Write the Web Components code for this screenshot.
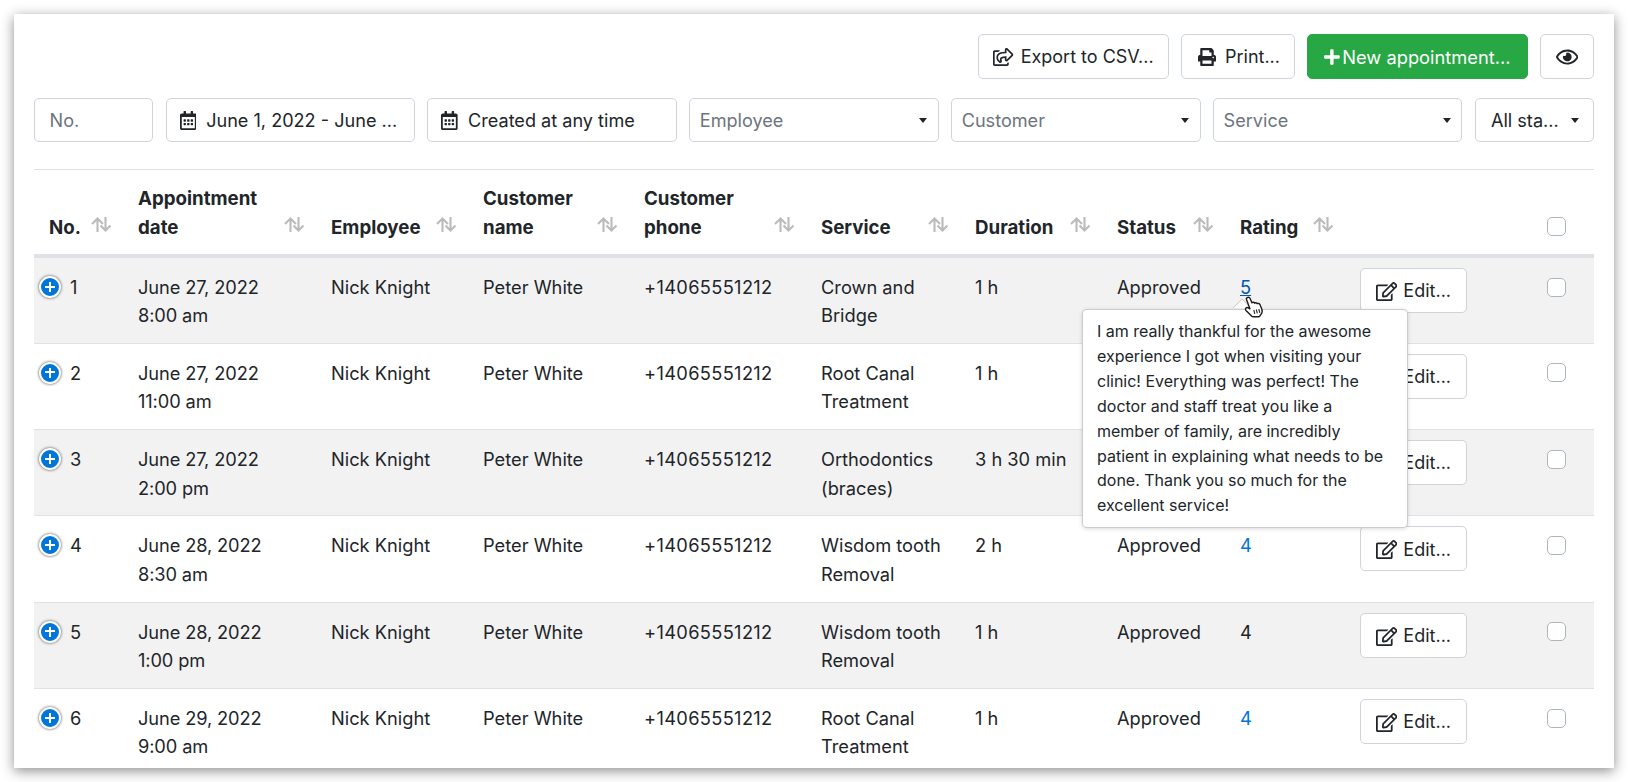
<!DOCTYPE html>
<html><head><meta charset="utf-8"><style>
html,body{margin:0;padding:0;background:#fff;height:782px;overflow:hidden}
body{font-family:Inter,"Liberation Sans",sans-serif;font-size:18px;color:#212529}
</style></head><body>
<appt-page></appt-page>
<script>
const I={
share:[576,"M561.938 158.06L417.94 14.092C387.926-15.922 336 5.097 336 48.032v57.198c-42.45 1.88-84.03 6.55-120.76 17.99-35.17 10.95-63.07 27.58-82.91 49.42C108.22 199.2 96 232.6 96 271.94c0 61.697 33.178 112.455 84.87 144.76 37.546 23.508 85.248-12.651 71.02-55.74-15.515-47.119-17.156-70.923 84.11-78.76V336c0 42.993 51.968 63.913 81.94 33.94l143.998-144c18.75-18.74 18.75-49.14 0-67.88zM384 336V232.16C255.309 234.082 166.492 255.35 206.31 376 176.79 357.55 144 324.08 144 271.94c0-109.334 129.14-118.947 240-119.85V48l144 144-144 144zm24.74 84.493a82.658 82.658 0 0 0 20.974-9.303c7.976-4.952 18.286.826 18.286 10.214V464c0 26.51-21.49 48-48 48H48c-26.51 0-48-21.49-48-48V112c0-26.51 21.49-48 48-48h132c6.627 0 12 5.373 12 12v4.486c0 4.917-2.987 9.369-7.569 11.152-13.702 5.331-26.396 11.537-38.05 18.585a12.138 12.138 0 0 1-6.28 1.777H54a6 6 0 0 0-6 6v340a6 6 0 0 0 6 6h340a6 6 0 0 0 6-6v-25.966c0-5.37 3.579-10.059 8.74-11.541z"],
print:[512,"M448 192V77.25c0-8.49-3.37-16.62-9.37-22.63L393.37 9.37c-6-6-14.14-9.37-22.63-9.37H96C78.33 0 64 14.33 64 32v160c-35.35 0-64 28.65-64 64v112c0 8.84 7.16 16 16 16h48v96c0 17.67 14.33 32 32 32h320c17.67 0 32-14.33 32-32v-96h48c8.84 0 16-7.16 16-16V256c0-35.35-28.65-64-64-64zm-64 256H128v-96h256v96zm0-224H128V64h192v48c0 8.84 7.16 16 16 16h48v96zm48 72c-13.25 0-24-10.75-24-24 0-13.26 10.75-24 24-24s24 10.74 24 24c0 13.25-10.75 24-24 24z"],
plus:[448,"M416 208H272V64c0-17.67-14.33-32-32-32h-32c-17.67 0-32 14.33-32 32v144H32c-17.67 0-32 14.33-32 32v32c0 17.67 14.33 32 32 32h144v144c0 17.67 14.33 32 32 32h32c17.67 0 32-14.33 32-32V304h144c17.67 0 32-14.33 32-32v-32c0-17.67-14.33-32-32-32z"],
eye:[576,"M288 144a110.94 110.94 0 0 0-31.24 5 55.4 55.4 0 0 1 7.24 27 56 56 0 0 1-56 56 55.4 55.4 0 0 1-27-7.24A111.71 111.71 0 1 0 288 144zm284.52 97.4C518.29 135.59 410.93 64 288 64S57.68 135.64 3.48 241.41a32.35 32.35 0 0 0 0 29.19C57.71 376.41 165.07 448 288 448s230.32-71.64 284.52-177.41a32.35 32.35 0 0 0 0-29.19zM288 400c-98.65 0-189.09-55-237.93-144C98.91 167 189.34 112 288 112s189.09 55 237.93 144C477.1 345 386.66 400 288 400z"],
cal:[448,"M148 288h-40c-6.6 0-12-5.4-12-12v-40c0-6.6 5.4-12 12-12h40c6.6 0 12 5.4 12 12v40c0 6.6-5.4 12-12 12zm108-12v-40c0-6.6-5.4-12-12-12h-40c-6.6 0-12 5.4-12 12v40c0 6.6 5.4 12 12 12h40c6.6 0 12-5.4 12-12zm96 0v-40c0-6.6-5.4-12-12-12h-40c-6.6 0-12 5.4-12 12v40c0 6.6 5.4 12 12 12h40c6.6 0 12-5.4 12-12zm-96 96v-40c0-6.6-5.4-12-12-12h-40c-6.6 0-12 5.4-12 12v40c0 6.6 5.4 12 12 12h40c6.6 0 12-5.4 12-12zm-96 0v-40c0-6.6-5.4-12-12-12h-40c-6.6 0-12 5.4-12 12v40c0 6.6 5.4 12 12 12h40c6.6 0 12-5.4 12-12zm192 0v-40c0-6.6-5.4-12-12-12h-40c-6.6 0-12 5.4-12 12v40c0 6.6 5.4 12 12 12h40c6.6 0 12-5.4 12-12zm96-260v352c0 26.5-21.5 48-48 48H48c-26.5 0-48-21.5-48-48V112c0-26.5 21.5-48 48-48h48V12c0-6.6 5.4-12 12-12h40c6.6 0 12 5.4 12 12v52h128V12c0-6.6 5.4-12 12-12h40c6.6 0 12 5.4 12 12v52h48c26.5 0 48 21.5 48 48zm-48 346V160H48v298c0 3.3 2.7 6 6 6h340c3.3 0 6-2.7 6-6z"],
edit:[576,"M402.3 344.9l32-32c5-5 13.7-1.5 13.7 5.7V464c0 26.5-21.5 48-48 48H48c-26.5 0-48-21.5-48-48V112c0-26.5 21.5-48 48-48h273.5c7.1 0 10.7 8.6 5.7 13.7l-32 32c-1.5 1.5-3.5 2.3-5.7 2.3H48v352h352V350.5c0-2.1.8-4.1 2.3-5.6zm156.6-201.8L296.3 405.7l-90.4 10c-26.2 2.9-48.5-19.2-45.6-45.6l10-90.4L432.9 17.1c22.9-22.9 59.9-22.9 82.7 0l43.2 43.2c22.9 22.9 22.9 60 .1 82.8zM460.1 174L402 115.9 216.2 301.8l-7.3 65.3 65.3-7.3L460.1 174zm64.8-79.7l-43.2-43.2c-4.1-4.1-10.8-4.1-14.8 0L436 82l58.1 58.1 30.9-30.9c4-4.2 4-10.8-.1-14.9z"]
};
const ic=(n,h)=>`<svg viewBox="0 0 ${I[n][0]} 512" style="height:${h}px;width:auto;display:block;fill:currentColor;flex:none"><path d="${I[n][1]}"/></svg>`;
const sortIcon=`<svg viewBox="0 0 21 15" width="21" height="15" fill="none" stroke="#bbb" stroke-width="2.1"><path d="M6.500 15V1.500M1 7l5.500-5.500L12 7M14.500 0v13.500M9.500 8.500l5 5 5-5"/></svg>`;

class ApptBtn extends HTMLElement{constructor(){super();this.attachShadow({mode:'open'}).innerHTML=`<style>
:host{display:inline-flex;align-items:center;justify-content:center;box-sizing:border-box;height:45px;border:1.5px solid #ced4da;border-radius:5px;background:#fff;color:#212529;white-space:nowrap;gap:var(--gap,6px);font-size:18px}
:host([primary]){background:#28a745;border-color:#28a745;color:#fff}
</style><slot></slot>`}}
customElements.define('appt-btn',ApptBtn);

class ApptField extends HTMLElement{constructor(){super();this.attachShadow({mode:'open'}).innerHTML=`<style>
:host{display:flex;align-items:center;box-sizing:border-box;height:44px;border:1.5px solid #ced4da;border-radius:5px;background:#fff;padding:0 9.5px;color:#212529;white-space:nowrap;overflow:hidden;font-size:18.1px;min-width:0;gap:10px}
:host([ph]){color:#6c757d}
.c{display:none;margin-left:auto;width:0;height:0;border-left:4.5px solid transparent;border-right:4.5px solid transparent;border-top:5.5px solid #212529;flex:none;margin-right:var(--cr,1px)}
:host([caret]) .c{display:block}
</style><slot></slot><span class="c"></span>`}}
customElements.define('appt-field',ApptField);

class ApptControl extends HTMLElement{constructor(){super();this.attachShadow({mode:'open'}).innerHTML=`<style>
:host{display:block;box-sizing:border-box;width:22px;height:22px;border-radius:50%;background:#0275d8;border:2.5px solid #fff;box-shadow:0 0 3px #444;position:relative;flex:none}
:host::before,:host::after{content:"";position:absolute;background:#fff}
:host::before{left:4px;right:4px;top:7.5px;height:2px}
:host::after{top:4px;bottom:4px;left:7.5px;width:2px}
</style>`}}
customElements.define('appt-control',ApptControl);

class ApptCheck extends HTMLElement{constructor(){super();this.attachShadow({mode:'open'}).innerHTML=`<style>
:host{display:block;box-sizing:border-box;width:19px;height:19px;border:1.5px solid #adb5bd;border-radius:5px;background:#fff}
</style>`}}
customElements.define('appt-check',ApptCheck);

class ApptPopover extends HTMLElement{constructor(){super();this.attachShadow({mode:'open'}).innerHTML=`<style>
:host{position:absolute;left:1068px;top:295px;width:326px;box-sizing:border-box;background:#fff;border:1px solid rgba(0,0,0,.2);border-radius:5px;padding:9px 14px 0;height:219px;font-size:16px;line-height:24.9px;color:#212529;box-shadow:0 1px 4px rgba(0,0,0,.15)}
.a{position:absolute;left:152px;top:-9px;width:13px;height:13px;background:#fff;border-left:1px solid rgba(0,0,0,.22);border-top:1px solid rgba(0,0,0,.22);transform:rotate(45deg);clip-path:polygon(0 0,100% 0,0 100%)}
</style><span class="a"></span><slot></slot>`}}
customElements.define('appt-popover',ApptPopover);

class ApptPage extends HTMLElement{constructor(){super();
const rows=[
['1','June 27, 2022','8:00 am','Crown and','Bridge','1 h','5','hover'],
['2','June 27, 2022','11:00 am','Root Canal','Treatment','1 h','',''],
['3','June 27, 2022','2:00 pm','Orthodontics','(braces)','3 h 30 min','',''],
['4','June 28, 2022','8:30 am','Wisdom tooth','Removal','2 h','4','link'],
['5','June 28, 2022','1:00 pm','Wisdom tooth','Removal','1 h','4',''],
['6','June 29, 2022','9:00 am','Root Canal','Treatment','1 h','4','link']];
const heads=['No.','Appointment<br>date','Employee','Customer<br>name','Customer<br>phone','Service','Duration','Status','Rating'];
const widths=[89,193,152,161,177,154,142,123,120,187,62];
const th=heads.map(h=>`<th><div class="h"><span>${h}</span>${sortIcon}</div></th>`).join('');
const tr=rows.map(r=>{
 const rating=r[7]==='hover'?`<a class="hov">${r[6]}</a>`:r[7]==='link'?`<a>${r[6]}</a>`:r[6];
 return `<tr><td class="no"><div><appt-control></appt-control><span>${r[0]}</span></div></td><td class="d">${r[1]}<br>${r[2]}</td><td>Nick Knight</td><td>Peter White</td><td class="ph">+14065551212</td><td>${r[3]}<br>${r[4]}</td><td>${r[5]}</td><td>Approved</td><td>${rating}</td><td class="e"><appt-btn style="width:107px;--gap:6px;padding-top:2px">${ic('edit',19)}Edit...</appt-btn></td><td class="k"><appt-check></appt-check></td></tr>`}).join('');
this.attachShadow({mode:'open'}).innerHTML=`<style>
:host{display:block;box-sizing:border-box;position:absolute;left:14px;top:14px;width:1600px;height:754px;background:#fff;box-shadow:0 3px 12px rgba(0,0,0,.45);}
.clip{position:absolute;inset:0;overflow:hidden;padding:20px 20px 0;box-sizing:border-box}
.top{display:flex;justify-content:flex-end;gap:12px}
.filters{display:grid;grid-template-columns:119px repeat(5,1fr) 119px;gap:12.5px;margin-top:19px}
.rule{height:1px;background:#dee2e6;margin-top:27px}
table{border-collapse:collapse;table-layout:fixed;width:1560px;line-height:28.4px;font-size:18.25px}
th{font-weight:700;text-align:left;vertical-align:bottom;padding:13px 11px 12px 15px;height:86px;box-sizing:border-box;border-bottom:4px solid #dee2e6;font-size:18.7px}
.h{display:flex;justify-content:space-between;align-items:flex-end}
.h svg{margin-bottom:10px;flex:none}
td{padding:15px 15px 13px;vertical-align:top;border-bottom:1px solid #dee2e6;height:86.3px;box-sizing:border-box;font-weight:400}
td.ph{letter-spacing:.34px}
td.d{letter-spacing:-.12px}
tbody tr:nth-child(odd) td{background:#f2f2f2}
td.no{padding-left:5px}
td.no div{display:flex;align-items:center;gap:9px;height:28px}
td.e{padding:10px 0 0 15px}
td.k{padding:19.5px 0 0 15px}
a{color:#0275d8}
a.hov{color:#0056b3;text-decoration:underline}
</style>
<div class="clip">
<div class="top">
<appt-btn style="width:191px;--gap:7px">${ic('share',18)}Export to CSV...</appt-btn>
<appt-btn style="width:114px;--gap:9px;padding-left:2px">${ic('print',18)}Print...</appt-btn>
<appt-btn primary style="width:221px;--gap:2px;font-size:18.3px">${ic('plus',18)}New appointment...</appt-btn>
<appt-btn style="width:54px">${ic('eye',20)}</appt-btn>
</div>
<div class="filters">
<appt-field ph style="padding-left:14.5px">No.</appt-field>
<appt-field style="padding-left:13px">${ic('cal',19)}June 1, 2022 - June ...</appt-field>
<appt-field style="padding-left:13px">${ic('cal',19)}Created at any time</appt-field>
<appt-field ph caret>Employee</appt-field>
<appt-field ph caret>Customer</appt-field>
<appt-field ph caret>Service</appt-field>
<appt-field caret style="padding-left:15px;--cr:4.5px">All sta...</appt-field>
</div>
<div class="rule"></div>
<table><colgroup>${widths.map(w=>`<col style="width:${w}px">`).join('')}</colgroup>
<thead><tr>${th}<th></th><th style="padding:0 0 18px 15px"><appt-check></appt-check></th></tr></thead>
<tbody>${tr}</tbody></table>
</div>
<appt-popover>I am really thankful for the awesome experience I got when visiting your clinic! Everything was perfect! The doctor and staff treat you like a member of family, are incredibly patient in explaining what needs to be done. Thank you so much for the excellent service!</appt-popover>
<svg style="position:absolute;left:1230px;top:282px" width="21" height="22" viewBox="0 0 21 22"><path d="M3.200 1.600c1.400-.8 2.500 0 3 1.200l1.700 3.900c.9-.7 2.100-.5 2.700.4.8-.6 2.100-.4 2.600.5.9-.5 2.200-.1 2.700.9l1.800 4.300c.8 2 .5 4-.6 5.400l-1 1.400c-.4.7-1 1.200-1.900 1.200H9.600c-.9 0-1.700-.4-2.300-1.100L2 14.500c-.7-.8-.6-2 .2-2.600.8-.6 1.800-.5 2.600.2l1.300 1.200L2.500 3.600c-.4-.8 0-1.600.7-2z" fill="#fff" stroke="#1c1c1c" stroke-width="1.400"/><path d="M9.800 14l1 3.800M12.300 13.500l1 3.800M14.800 13l1 3.800" stroke="#222" stroke-width="1.100" fill="none"/></svg>
`}}
customElements.define('appt-page',ApptPage);
</script></body></html>
